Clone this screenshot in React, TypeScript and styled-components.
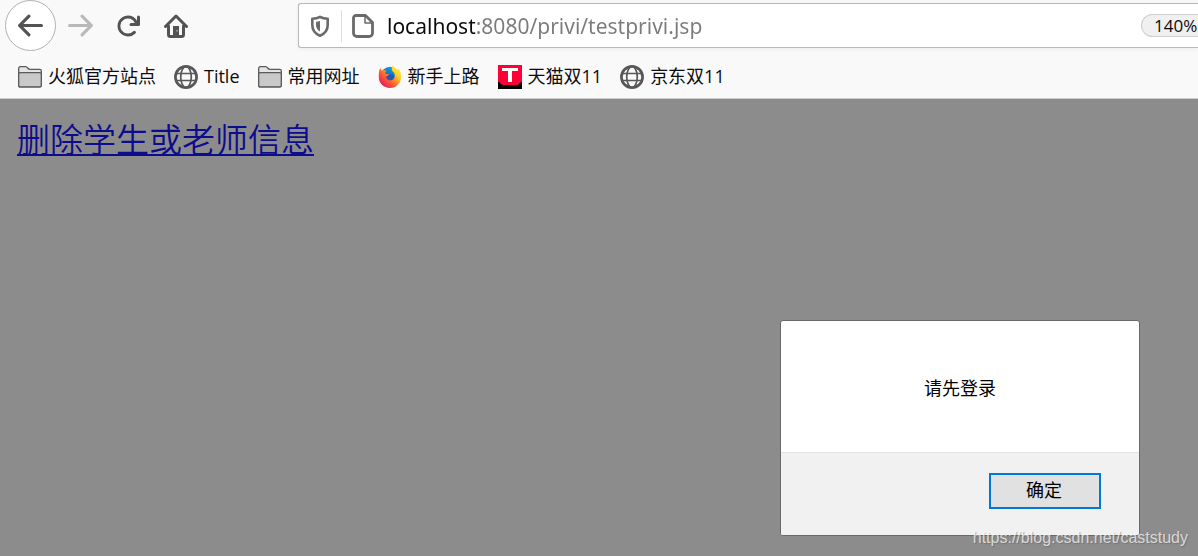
import React from "react";
import styled, { createGlobalStyle } from "styled-components";

const GlobalStyle = createGlobalStyle`
  * { box-sizing: border-box; }
  body {
    margin: 0;
    background: #8c8c8c;
    font-family: "Open Sans", "Noto Sans CJK SC", sans-serif;
  }
  svg { display: block; flex: none; }
`;

const Browser = styled.div`
  display: flex;
  flex-direction: column;
  min-height: 100vh;
  overflow: hidden;
`;

const Chrome = styled.header`
  background: #f9f9fa;
  border-bottom: 1px solid #cecece;
`;

const Toolbar = styled.div`
  display: flex;
  align-items: center;
  height: 51px;
  padding-left: 5px;
`;

const NavButton = styled.button<{ $round?: boolean }>`
  display: flex;
  align-items: center;
  justify-content: center;
  flex: none;
  width: ${(p) => (p.$round ? 51 : 48)}px;
  height: ${(p) => (p.$round ? 51 : 48)}px;
  padding: 0;
  border: ${(p) => (p.$round ? "1px solid #b1b1b1" : "0")};
  border-radius: 50%;
  background: ${(p) => (p.$round ? "#fff" : "transparent")};
  color: #535354;

  &:disabled { color: #b9b9ba; }
`;

const UrlBar = styled.div`
  display: flex;
  align-items: center;
  flex: 1;
  min-width: 0;
  height: 45px;
  margin-left: 98px;
  padding-left: 9px;
  border: 1px solid #b9b9ba;
  border-right: 0;
  border-radius: 3px 0 0 3px;
  background: #fff;
  color: #6a6a6b;
  box-shadow: 0 1px 4px rgba(0, 0, 0, 0.06);
`;

const Divider = styled.span`
  flex: none;
  width: 1px;
  height: 32px;
  margin: 0 9px;
  background: #dedede;
`;

const Address = styled.input`
  flex: 1;
  min-width: 0;
  height: 40px;
  margin-left: 12px;
  padding: 0;
  border: 0;
  outline: 0;
  font: 21px "Noto Sans", sans-serif;
  color: transparent;
  background: linear-gradient(90deg, #0c0c0d 88px, #7b7b7b 88px);
  -webkit-background-clip: text;
  background-clip: text;
`;

const ZoomLevel = styled.button`
  flex: none;
  width: 57px;
  height: 23px;
  padding: 0 0 0 12px;
  border: 1px solid #cfcfcf;
  border-right: 0;
  border-radius: 12px 0 0 12px;
  background: #f0f0f0;
  color: #0c0c0d;
  font: 17px/20px "Open Sans", sans-serif;
  text-align: left;
`;

const Bookmarks = styled.nav`
  display: flex;
  align-items: center;
  gap: 18px;
  height: 47px;
  padding: 4px 18px 0;
`;

const Bookmark = styled.a`
  display: flex;
  align-items: center;
  gap: 6px;
  color: #0c0c0d;
  font-size: 18px;
  line-height: 22px;
  text-decoration: none;
  white-space: nowrap;

  span { padding-bottom: 2px; }
`;

const Page = styled.main`
  position: relative;
  flex: 1;
  min-height: 457px;
  padding: 15px 17px;
`;

const PageLink = styled.a`
  color: #0c0c8c;
  font-family: "Noto Sans CJK SC", sans-serif;
  font-size: 33px;
  font-weight: 350;
  line-height: 48px;
  text-decoration-thickness: 2px;
  text-underline-offset: 2px;
  text-decoration-skip-ink: none;
`;

const Dialog = styled.section`
  position: absolute;
  top: 221px;
  right: 58px;
  width: 360px;
  border: 1px solid #696969;
  border-radius: 3px;
  background: #fff;
  overflow: hidden;
`;

const Message = styled.p`
  margin: 0;
  padding: 55px 20px 52px;
  font-size: 18px;
  line-height: 24px;
  text-align: center;
`;

const DialogFooter = styled.footer`
  display: flex;
  justify-content: flex-end;
  padding: 20px 38px 26px;
  border-top: 1px solid #e3e3e3;
  background: #f1f1f1;
`;

const ConfirmButton = styled.button`
  width: 112px;
  height: 36px;
  padding: 0 2px 4px 0;
  border: 2px solid #0078d7;
  background: #e1e1e1;
  color: #000;
  font: 18px/24px "Noto Sans CJK SC", sans-serif;
`;

const Watermark = styled.span`
  position: absolute;
  right: 10px;
  bottom: 8px;
  color: rgba(255, 255, 255, 0.7);
  font: 16px/20px "Liberation Sans", sans-serif;
  text-shadow: 1px 1px 1px rgba(90, 90, 90, 0.5);
`;

const ARROW =
  "M15 7H3.414l4.293-4.293a1 1 0 0 0-1.414-1.414l-6 6a1 1 0 0 0 0 1.414l6 6a1 1 0 0 0 1.414-1.414L3.414 9H15a1 1 0 0 0 0-2z";

const BackIcon = () => (
  <svg width="25" height="25" viewBox="0 0 16 16" fill="currentColor"><path d={ARROW} /></svg>
);

const ForwardIcon = () => (
  <svg width="25" height="25" viewBox="0 0 16 16" fill="currentColor">
    <path d={ARROW} transform="matrix(-1 0 0 1 16 0)" />
  </svg>
);

const ReloadIcon = () => (
  <svg width="24" height="24" viewBox="0 0 16 16" fill="currentColor">
    <path d="M15 1a1 1 0 0 0-1 1v2.418A6.995 6.995 0 1 0 8 15a6.954 6.954 0 0 0 4.95-2.05 1 1 0 0 0-1.414-1.414A5.019 5.019 0 1 1 12.549 6H10a1 1 0 0 0 0 2h5a1 1 0 0 0 1-1V2a1 1 0 0 0-1-1z" />
  </svg>
);

const HomeIcon = () => (
  <svg width="24" height="24" viewBox="0 0 24 24" fill="none" stroke="currentColor" strokeWidth="3" strokeLinecap="round" strokeLinejoin="round">
    <path d="M1.500 12.500 12 2l10.500 10.500" />
    <path d="M4.500 12v8.500a2 2 0 0 0 2 2h11a2 2 0 0 0 2-2V12" />
    <path d="M9 12h6v10H9z" fill="currentColor" stroke="none" />
    <path d="M12.500 16h1v1.500h-1z" fill="#d8d8d8" stroke="none" />
  </svg>
);

const ShieldIcon = () => (
  <svg width="24" height="24" viewBox="0 0 24 24" fill="none" stroke="currentColor">
    <path d="M12 2.800c2.500 1.400 5 1.800 7.700 1.900V11c0 5-2.700 8.600-7.700 10.700C7 19.600 4.300 16 4.300 11V4.700C7 4.600 9.500 4.200 12 2.800z" strokeWidth="2.600" strokeLinejoin="round" />
    <path d="M12 7v10.500c-2.600-1.500-4-3.700-4-6.500V7.800c1.400-.1 2.700-.3 4-.8z" fill="currentColor" stroke="none" />
  </svg>
);

const PageIcon = () => (
  <svg width="24" height="24" viewBox="0 0 24 24" fill="none" stroke="currentColor" strokeLinejoin="round">
    <path d="M5 1.500h9.500l7 7V19a3.500 3.500 0 0 1-3.500 3.500H6A3.500 3.500 0 0 1 2.500 19V4A2.500 2.500 0 0 1 5 1.500z" strokeWidth="2.800" />
    <path d="M14 2v7h7" strokeWidth="1.500" />
  </svg>
);

const FolderIcon = () => (
  <svg width="24" height="24" viewBox="0 0 24 24" stroke="#5a5a5b" strokeWidth="1.300" strokeLinejoin="round">
    <path d="M.7 20.500V3.200c0-.9.600-1.500 1.500-1.500h5.600c1.800 0 2 2.700 4 2.700h9.800c1 0 1.700.7 1.700 1.700v14.400c0 .8-.6 1.300-1.300 1.300H2c-.8 0-1.300-.5-1.300-1.300z" fill="#e4e4e5" />
    <path d="M.7 9c0-.8.5-1.300 1.300-1.300h20c.8 0 1.300.5 1.300 1.300v11.500c0 .8-.6 1.300-1.300 1.300H2c-.8 0-1.300-.5-1.300-1.300z" fill="#c9c9cb" />
  </svg>
);

const GlobeIcon = () => (
  <svg width="24" height="24" viewBox="0 0 24 24" fill="none" stroke="#58585a">
    <circle cx="12" cy="12" r="10.600" strokeWidth="2.700" />
    <ellipse cx="12" cy="12" rx="5.300" ry="10.500" strokeWidth="1.700" />
    <path d="M2.500 8.500h19M2.500 15.500h19" strokeWidth="1.500" />
  </svg>
);

const FirefoxIcon = () => (
  <svg width="24" height="24" viewBox="0 0 24 24">
    <defs>
      <linearGradient id="flame" x1="1" y1="0" x2="0.150" y2="0.900">
        <stop offset="0" stopColor="#fff44f" />
        <stop offset="0.350" stopColor="#ffd02f" />
        <stop offset="0.650" stopColor="#ff6a2c" />
        <stop offset="1" stopColor="#e6175c" />
      </linearGradient>
      <linearGradient id="sphere" x1="0.700" y1="0" x2="0.300" y2="1">
        <stop offset="0" stopColor="#00a7ea" />
        <stop offset="1" stopColor="#2a3f9e" />
      </linearGradient>
    </defs>
    <circle cx="12" cy="10.500" r="8.800" fill="url(#sphere)" />
    <path
      d="M2.300 2.500c.1 1.500.6 2.300 1.500 3 1.500-.7 3.200-.5 4.700.4-1 .8-1.400 1.700-1.200 2.700 1 .8 2.500.7 3.700 1-.3 1.300-2 1.500-2.700 2.500.4 2 2.300 3.500 4.500 3.200 2.600-.3 4.300-2.500 4-5-.2-2-1.300-3.200-2.600-4.200-.8-2-.6-4 .6-5.800 1 2.400 3.500 3.500 5.200 5.300.2-.8.100-1.600-.3-2.600 2.400 2.100 3.700 5.400 3.500 9C22.900 18.300 18.200 23 12 23S.8 18.300.8 12.300C.7 8.800.9 5.200 2.300 2.500z"
      fill="url(#flame)"
    />
    <path d="M8.300 12.300c.7-1.600 2.500-1.600 3.500-2.800 1.500-.6 3.700.3 4.400 2-.6 2.500-2 3.800-4 3.800s-3.500-1.300-3.900-3z" fill="#2457b8" />
  </svg>
);

const TmallIcon = () => (
  <svg width="24" height="24" viewBox="0 0 24 24">
    <path d="M0 0h24v24H0z" fill="#000" />
    <path d="M0 0h24v17c-1.500 0-2 .6-2.500 1.600S20 20 18.500 20h-13c-1.500 0-2.500-.4-3-1.400S1.500 17 0 17z" fill="#ff0036" />
    <path d="M4 3h16v3h-6v11h-4V6H4z" fill="#fff" />
  </svg>
);

const bookmarks = [
  { label: "火狐官方站点", Icon: FolderIcon },
  { label: "Title", Icon: GlobeIcon },
  { label: "常用网址", Icon: FolderIcon },
  { label: "新手上路", Icon: FirefoxIcon },
  { label: "天猫双11", Icon: TmallIcon },
  { label: "京东双11", Icon: GlobeIcon },
];

export default function App() {
  return (
    <Browser>
      <GlobalStyle />
      <Chrome>
        <Toolbar>
          <NavButton $round aria-label="Back"><BackIcon /></NavButton>
          <NavButton disabled aria-label="Forward"><ForwardIcon /></NavButton>
          <NavButton aria-label="Reload"><ReloadIcon /></NavButton>
          <NavButton aria-label="Home"><HomeIcon /></NavButton>
          <UrlBar>
            <ShieldIcon />
            <Divider />
            <PageIcon />
            <Address aria-label="Address" defaultValue="localhost:8080/privi/testprivi.jsp" spellCheck={false} />
            <ZoomLevel>140%</ZoomLevel>
          </UrlBar>
        </Toolbar>
        <Bookmarks>
          {bookmarks.map(({ label, Icon }) => (
            <Bookmark href="#" key={label}>
              <Icon />
              <span>{label}</span>
            </Bookmark>
          ))}
        </Bookmarks>
      </Chrome>
      <Page>
        <PageLink href="#">删除学生或老师信息</PageLink>
        <Dialog role="dialog" aria-labelledby="message">
          <Message id="message">请先登录</Message>
          <DialogFooter>
            <ConfirmButton>确定</ConfirmButton>
          </DialogFooter>
        </Dialog>
        <Watermark>https://blog.csdn.net/caststudy</Watermark>
      </Page>
    </Browser>
  );
}
